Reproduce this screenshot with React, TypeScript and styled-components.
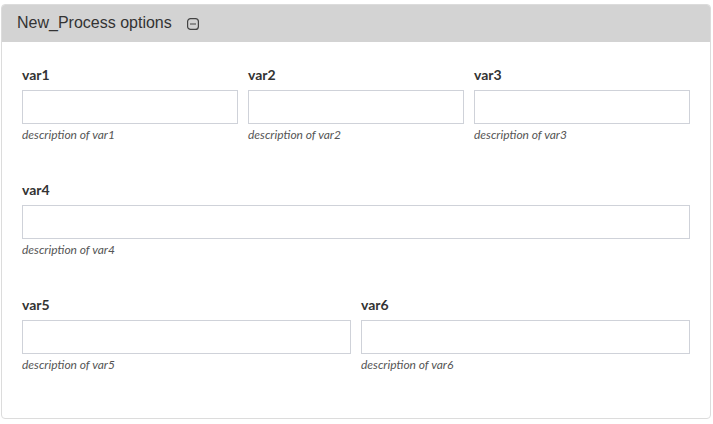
import React from "react";
import styled, { createGlobalStyle } from "styled-components";

const Global = createGlobalStyle`
  html, body { margin: 0; padding: 0; background: #fff; }
  body { font-family: Lato, "Open Sans", sans-serif; }
  * { box-sizing: border-box; }
`;

const Page = styled.div`
  padding: 4px 3px 0 1px;
`;

const Panel = styled.section`
  width: 710px;
  height: 415px;
  border: 1px solid #dcdcdc;
  border-radius: 4px;
  overflow: hidden;
  background: #fff;
`;

const Header = styled.header`
  display: flex;
  align-items: center;
  gap: 15px;
  height: 37px;
  padding: 8px 0 9px 15px;
  background: #d3d3d3;
`;

const Title = styled.h3`
  margin: 0;
  font-family: "Liberation Sans", Arial, sans-serif;
  font-weight: 400;
  font-size: 16px;
  line-height: 20px;
  color: #333;
`;

const Toggle = styled.button`
  display: flex;
  padding: 0;
  margin: 2px 0 0 0;
  border: 0;
  background: none;
  cursor: pointer;
`;

const Body = styled.div`
  padding: 23px 20px 8px 20px;
`;

const Row = styled.div<{ $cols: number }>`
  display: grid;
  grid-template-columns: repeat(${(p) => p.$cols}, 1fr);
  column-gap: 10px;
  margin-bottom: 37px;
`;

const Field = styled.div`
  display: flex;
  flex-direction: column;
`;

const Label = styled.label`
  font-family: Lato, sans-serif;
  font-weight: 700;
  font-size: 14px;
  line-height: 20px;
  color: #333;
  margin-bottom: 5px;
`;

const Input = styled.input`
  height: 34px;
  width: 100%;
  border: 1px solid #cfd2d9;
  border-radius: 0;
  background: #fff;
  padding: 6px 10px;
  font-size: 14px;
  outline: none;
`;

const Help = styled.span`
  margin-top: 2px;
  font-family: Lato, sans-serif;
  font-style: italic;
  font-size: 12px;
  line-height: 17px;
  color: #555;
`;

const CollapseIcon = () => (
  <svg width="12" height="12" viewBox="0 0 12 12" fill="none">
    <rect x="0.6" y="0.6" width="10.8" height="10.8" rx="3" stroke="#444" strokeWidth="1.2" />
    <line x1="3" y1="6" x2="9" y2="6" stroke="#444" strokeWidth="1.2" />
  </svg>
);

const rows: string[][] = [["var1", "var2", "var3"], ["var4"], ["var5", "var6"]];

export default function App() {
  return (
    <>
      <Global />
      <Page>
        <Panel>
          <Header>
            <Title>New_Process options</Title>
            <Toggle aria-label="collapse">
              <CollapseIcon />
            </Toggle>
          </Header>
          <Body>
            {rows.map((r, i) => (
              <Row key={i} $cols={r.length}>
                {r.map((name) => (
                  <Field key={name}>
                    <Label htmlFor={name}>{name}</Label>
                    <Input id={name} type="text" />
                    <Help>description of {name}</Help>
                  </Field>
                ))}
              </Row>
            ))}
          </Body>
        </Panel>
      </Page>
    </>
  );
}
